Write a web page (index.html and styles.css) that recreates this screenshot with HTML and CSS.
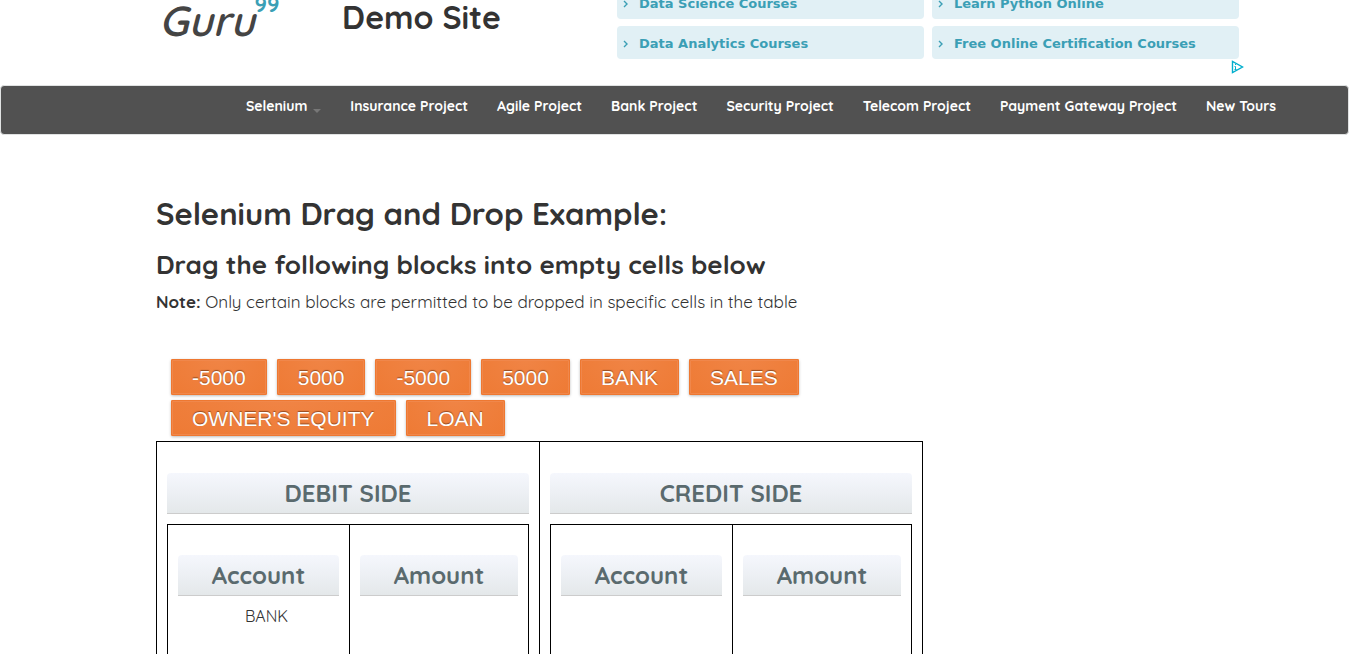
FILE: index.html
```
<!DOCTYPE html>
<html lang="en">
<head>
<meta charset="utf-8">
<title>Demo Site</title>
<link rel="stylesheet" href="styles.css">
</head>
<body>
<header class="site-header">
  <a class="logo" href="#" aria-label="Guru99"><span class="logo-name">Guru</span><span class="logo-number">99</span></a>
  <h2 class="site-title">Demo Site</h2>
  <div class="ads">
    <div class="ad-grid">
      <a class="ad-link" href="#"><svg class="chevron" viewBox="0 0 5 8"><path d="M1 1l3 3-3 3"/></svg>Data Science Courses</a>
      <a class="ad-link" href="#"><svg class="chevron" viewBox="0 0 5 8"><path d="M1 1l3 3-3 3"/></svg>Learn Python Online</a>
      <a class="ad-link" href="#"><svg class="chevron" viewBox="0 0 5 8"><path d="M1 1l3 3-3 3"/></svg>Data Analytics Courses</a>
      <a class="ad-link" href="#"><svg class="chevron" viewBox="0 0 5 8"><path d="M1 1l3 3-3 3"/></svg>Free Online Certification Courses</a>
    </div>
    <a class="ad-choices" href="#" aria-label="Ad choices"><svg viewBox="0 0 13 14"><path d="M1.500 1.500v11L11.500 7z"/><path class="thin" d="M4.500 4v1M3.500 6.500h1v3M3.500 9.500h2"/></svg></a>
  </div>
</header>
<nav class="navbar">
  <ul class="nav-list">
    <li><a href="#">Selenium<span class="caret"></span></a></li>
    <li><a href="#">Insurance Project</a></li>
    <li><a href="#">Agile Project</a></li>
    <li><a href="#">Bank Project</a></li>
    <li><a href="#">Security Project</a></li>
    <li><a href="#">Telecom Project</a></li>
    <li><a href="#">Payment Gateway Project</a></li>
    <li><a href="#">New Tours</a></li>
  </ul>
</nav>
<main class="content">
  <h1>Selenium Drag and Drop Example:</h1>
  <h2>Drag the following blocks into empty cells below</h2>
  <p class="note"><b>Note:</b> Only certain blocks are permitted to be dropped in specific cells in the table</p>
  <div class="blocks">
    <a class="block" href="#" draggable="true">-5000</a>
    <a class="block" href="#" draggable="true">5000</a>
    <a class="block" href="#" draggable="true">-5000</a>
    <a class="block" href="#" draggable="true">5000</a>
    <a class="block" href="#" draggable="true">BANK</a>
    <a class="block" href="#" draggable="true">SALES</a>
    <a class="block" href="#" draggable="true">OWNER'S EQUITY</a>
    <a class="block" href="#" draggable="true">LOAN</a>
  </div>
  <table class="ledger">
    <tr>
      <td>
        <h3>DEBIT SIDE</h3>
        <table class="side">
          <tr>
            <td class="account"><h3>Account</h3><p class="entry">BANK</p></td>
            <td><h3>Amount</h3></td>
          </tr>
        </table>
      </td>
      <td>
        <h3>CREDIT SIDE</h3>
        <table class="side">
          <tr>
            <td class="account"><h3>Account</h3></td>
            <td><h3>Amount</h3></td>
          </tr>
        </table>
      </td>
    </tr>
  </table>
</main>
</body>
</html>
```
FILE: styles.css
```
* { box-sizing: border-box; }
html { height: 100%; overflow: hidden; }
body {
  margin: 0;
  background: #fff;
  color: #333;
  font: 16px/22px Quicksand, Lato, sans-serif;
}
a { text-decoration: none; }
h1, h2, h3, p { margin: 0; }

/* The header is partly scrolled out of view */
.site-header {
  display: flex;
  margin-top: -14px;
  height: 99px;
  padding-left: 159px;
}
.logo { display: flex; width: 183px; padding-top: 6px; color: #444; }
.logo-name { font: italic 600 42px/58px Quicksand, Lato, sans-serif; }
.logo-number { font: bold 22px/24px Quicksand, Lato, sans-serif; color: #3b9fb5; }
.site-title { width: 275px; padding-top: 13px; font-size: 32px; line-height: 36px; }
.ads { display: flex; flex-direction: column; width: 627px; }
.ad-grid { display: grid; grid-template-columns: 307px 307px; gap: 7px 8px; }
.ad-link {
  display: flex;
  align-items: center;
  gap: 11px;
  height: 33px;
  padding: 2px 6px 0;
  border-radius: 4px;
  background: #e1f0f5;
  color: #3b9fb5;
  font: bold 13px/18px "DejaVu Sans", sans-serif;
}
.chevron { width: 5px; height: 8px; fill: none; stroke: #3b9fb5; stroke-width: 1.4; }
.ad-choices { align-self: flex-end; width: 13px; height: 14px; margin-top: 1px; }
.ad-choices svg { display: block; width: 13px; height: 14px; fill: none; stroke: #00aecd; stroke-width: 1.4; }
.ad-choices .thin { stroke-width: 1; }

.navbar {
  height: 50px;
  border: 1px solid #e0e2e2;
  border-radius: 4px;
  background: #515151;
}
.nav-list {
  display: flex;
  gap: 29px;
  margin: 0;
  padding: 8px 0 0 245px;
  list-style: none;
}
.nav-list a { color: #fff; font-size: 14px; font-weight: bold; line-height: 20px; white-space: nowrap; }
.caret {
  display: inline-block;
  margin-left: 6px;
  border: 4px solid transparent;
  border-top-color: #777;
  border-bottom: 0;
  vertical-align: -2px;
}

.content { max-width: 923px; padding: 59px 0 0 156px; }
.content h1 { font-size: 31px; line-height: 40px; }
.content h2 { margin-top: 14px; font-size: 26px; line-height: 34px; }
.note { margin-top: 9px; font-size: 17px; }
.blocks { display: flex; flex-wrap: wrap; gap: 5px 10px; margin-top: 46px; padding: 0 15px; }
.block {
  height: 36px;
  padding: 0 21px;
  border-radius: 2px;
  background: radial-gradient(ellipse at 50% 0, #f08445, #ee7a34);
  box-shadow: inset 0 0 0 1px #ee7831, inset 0 0 0 2px #f0874b, 0 1px 3px #bbb;
  color: #fff;
  font: 21px/37px "Liberation Sans", Arial, sans-serif;
  text-shadow: 0 -1px 1px #914a20;
}
.ledger, .side { width: 100%; border-collapse: collapse; table-layout: fixed; }
.ledger { margin-top: 5px; }
.ledger td { padding: 31px 10px 10px; border: 1px solid #000; vertical-align: top; text-align: center; }
.ledger h3 {
  height: 41px;
  border-bottom: 1px solid #ccc;
  border-radius: 4px 4px 0 0;
  background: linear-gradient(#f5f7fd, #e4e8ea);
  color: #5a6a6e;
  font-size: 24px;
  line-height: 40px;
}
.side { margin-top: 10px; }
.ledger .side td { height: 160px; padding-top: 30px; }
.side .account { width: 182px; }
.entry { margin-top: 9px; padding-left: 16px; }
```
